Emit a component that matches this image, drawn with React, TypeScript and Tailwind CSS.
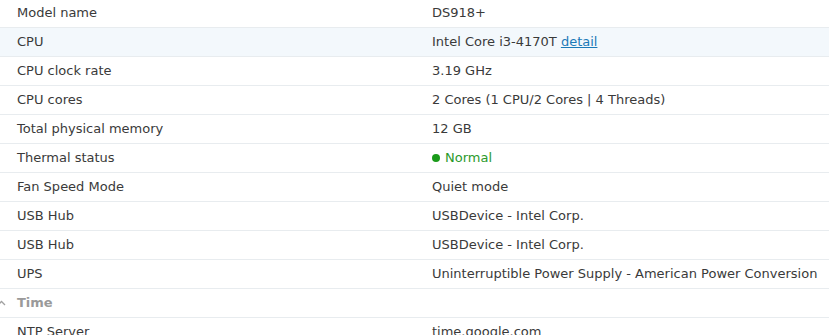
import React from 'react';

const rows: { label: string; value: React.ReactNode; active?: boolean }[] = [
  { label: 'Model name', value: 'DS918+' },
  {
    label: 'CPU',
    value: (
      <>
        Intel Core i3-4170T{' '}
        <a href="#" className="text-[#1b7ab8] underline">
          detail
        </a>
      </>
    ),
    active: true,
  },
  { label: 'CPU clock rate', value: '3.19 GHz' },
  { label: 'CPU cores', value: '2 Cores (1 CPU/2 Cores | 4 Threads)' },
  { label: 'Total physical memory', value: '12 GB' },
  {
    label: 'Thermal status',
    value: (
      <span className="flex items-center gap-[5px] text-[#2b9a2b]">
        <span className="w-[8px] h-[8px] rounded-full bg-[#1a9a1a]" />
        Normal
      </span>
    ),
  },
  { label: 'Fan Speed Mode', value: 'Quiet mode' },
  { label: 'USB Hub', value: 'USBDevice - Intel Corp.' },
  { label: 'USB Hub', value: 'USBDevice - Intel Corp.' },
  { label: 'UPS', value: 'Uninterruptible Power Supply - American Power Conversion' },
];

function Row({ label, value, active }: { label: string; value: React.ReactNode; active?: boolean }) {
  return (
    <div
      className={`flex h-[29px] items-center border-b border-[#e8ecef] ${active ? 'bg-[#f3f8fc]' : 'bg-white'}`}
    >
      <div className="w-[432px] pl-[17px] shrink-0">{label}</div>
      <div className="flex-1 whitespace-nowrap">{value}</div>
    </div>
  );
}

export default function App() {
  return (
    <div
      className="w-[829px] h-[335px] overflow-hidden bg-white text-[13px] text-[#3a3a3a]"
      style={{ fontFamily: '"DejaVu Sans", Verdana, sans-serif' }}
    >
      <div className="-mt-[1px]">
        {rows.map((r, i) => (
          <Row key={i} {...r} />
        ))}
        {/* Time section header */}
        <div className="relative flex h-[29px] items-center border-b border-[#e8ecef]">
          <svg
            className="absolute left-[-3px] top-[11px]"
            width="9"
            height="6"
            viewBox="0 0 9 6"
            fill="none"
          >
            <path d="M1 5 L4.5 1.5 L8 5" stroke="#a0a0a0" strokeWidth="1.3" />
          </svg>
          <div className="pl-[17px] font-bold text-[#9a9a9a]">Time</div>
        </div>
        <Row label="NTP Server" value="time.google.com" />
      </div>
    </div>
  );
}
